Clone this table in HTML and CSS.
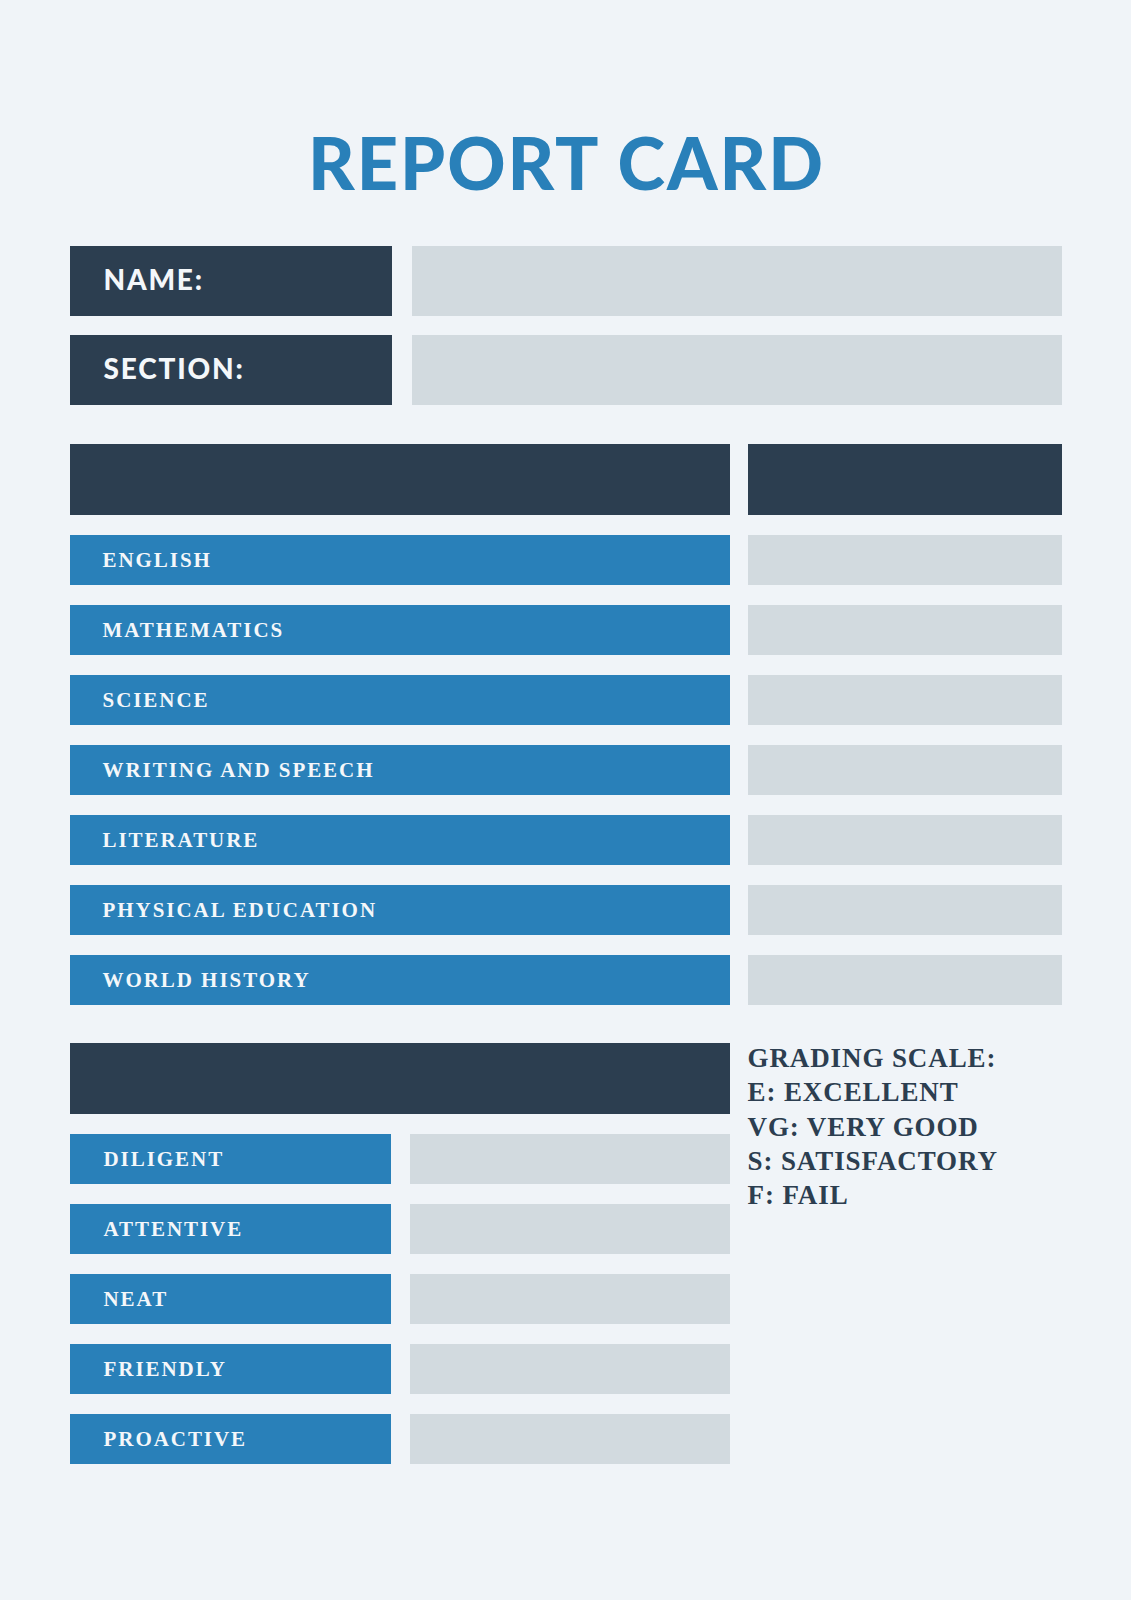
FILE: index.html
```html
<!DOCTYPE html>
<html lang="en">
<head>
<meta charset="utf-8">
<title>Report Card</title>
<link rel="stylesheet" href="styles.css">
</head>
<body>
<main class="page">
  <h1 class="title">REPORT CARD</h1>

  <section class="info">
    <div class="info-label">NAME:</div>
    <div class="field"></div>
    <div class="info-label">SECTION:</div>
    <div class="field"></div>
  </section>

  <section class="subjects">
    <div class="head"></div>
    <div class="head"></div>
    <div class="label">ENGLISH</div><div class="field"></div>
    <div class="label">MATHEMATICS</div><div class="field"></div>
    <div class="label">SCIENCE</div><div class="field"></div>
    <div class="label">WRITING AND SPEECH</div><div class="field"></div>
    <div class="label">LITERATURE</div><div class="field"></div>
    <div class="label">PHYSICAL EDUCATION</div><div class="field"></div>
    <div class="label">WORLD HISTORY</div><div class="field"></div>
  </section>

  <section class="lower">
    <div class="traits">
      <div class="head wide"></div>
      <div class="label">DILIGENT</div><div class="field"></div>
      <div class="label">ATTENTIVE</div><div class="field"></div>
      <div class="label">NEAT</div><div class="field"></div>
      <div class="label">FRIENDLY</div><div class="field"></div>
      <div class="label">PROACTIVE</div><div class="field"></div>
    </div>
    <div class="scale">
      <p>GRADING SCALE:</p>
      <p>E: EXCELLENT</p>
      <p>VG: VERY GOOD</p>
      <p>S: SATISFACTORY</p>
      <p>F: FAIL</p>
    </div>
  </section>
</main>
</body>
</html>
```
FILE: styles.css
```css
html, body {
  margin: 0;
  padding: 0;
}
body {
  background: #f0f4f8;
  min-height: 1600px;
}
.page {
  width: 992px;
  margin: 0 auto;
  padding-top: 126px;
  box-sizing: border-box;
}
.title {
  margin: 0 0 48px;
  font-family: "Lato", "Liberation Sans", sans-serif;
  font-weight: 900;
  font-size: 72px;
  line-height: 72px;
  letter-spacing: 2px;
  text-align: center;
  color: #2980b9;
  padding-left: 2px;
}
.info {
  display: grid;
  grid-template-columns: 322px 1fr;
  column-gap: 20px;
  row-gap: 19px;
}
.info-label {
  height: 70px;
  background: #2c3e50;
  color: #f4f7fa;
  font-family: "Lato", "Liberation Sans", sans-serif;
  font-weight: 900;
  font-size: 28px;
  letter-spacing: 1.8px;
  display: flex;
  align-items: center;
  padding-left: 34px;
  padding-bottom: 5px;
  box-sizing: border-box;
}
.field {
  background: #d2dadf;
}
.subjects {
  margin-top: 39px;
  display: grid;
  grid-template-columns: 660px 1fr;
  column-gap: 18px;
  row-gap: 20px;
}
.head {
  height: 71px;
  background: #2c3e50;
}
.label {
  height: 50px;
  background: #2980b9;
  color: #f4f7fa;
  font-family: "Liberation Serif", "DejaVu Serif", serif;
  font-weight: 700;
  font-size: 21px;
  letter-spacing: 1.95px;
  display: flex;
  align-items: center;
  padding-left: 33px;
  box-sizing: border-box;
}
.lower {
  margin-top: 38px;
  display: grid;
  grid-template-columns: 660px 1fr;
  column-gap: 18px;
  align-items: start;
}
.traits {
  display: grid;
  grid-template-columns: 321px 1fr;
  column-gap: 19px;
  row-gap: 20px;
}
.wide {
  grid-column: 1 / -1;
}
.traits .label {
  padding-left: 34px;
}
.scale {
  margin-top: -2px;
  font-family: "Liberation Serif", "DejaVu Serif", serif;
  font-weight: 700;
  font-size: 27px;
  line-height: 34.3px;
  letter-spacing: 0.9px;
  color: #2c3e50;
}
.scale p {
  margin: 0;
}
```
